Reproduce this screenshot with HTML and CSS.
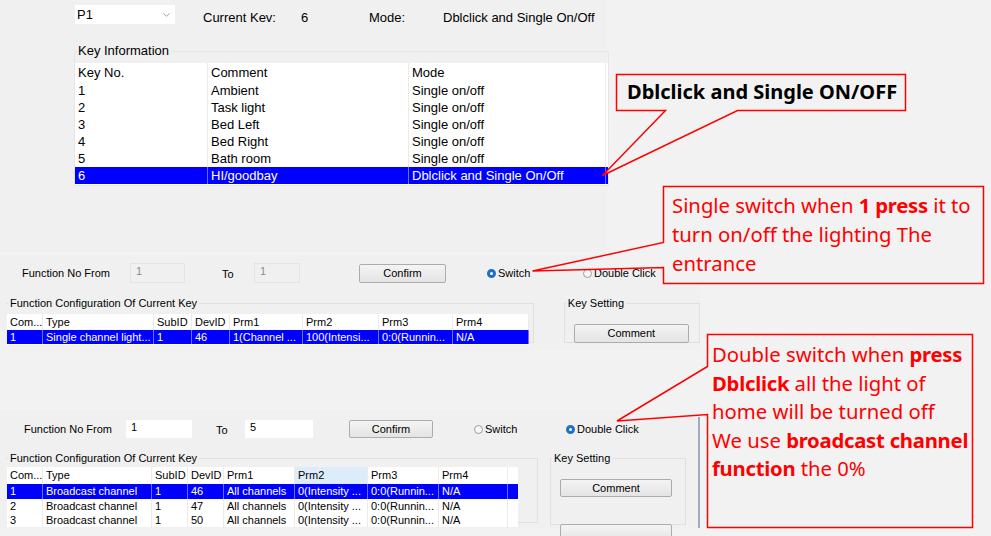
FILE: index.html
```html
<!doctype html>
<html>

<head>
    <meta charset="utf-8" />
    <title>Key Setting</title>
    <link rel="stylesheet" href="styles.css">
</head>

<body>
    <div class="slide">
        <!-- screenshot 1: key list -->
        <section class="shot shot-top">
            <div class="top-row">
                <div class="combo">
                    <span>P1</span>
                    <svg class="combo-arrow" width="7" height="4" viewBox="0 0 7 4">
                        <path d="M0.5 0.5L3.5 3.2L6.5 0.5" fill="none" stroke="#a0a0a0" stroke-width="1" />
                    </svg>
                </div>
                <span class="lbl lbl-kev">Current Kev:</span>
                <span class="lbl lbl-num">6</span>
                <span class="lbl lbl-mode">Mode:</span>
                <span class="lbl">Dblclick and Single On/Off</span>
            </div>
            <fieldset class="group group-key">
                <legend>Key Information</legend>
                <div class="grid key-grid">
                    <div class="row head"><span>Key No.</span><span>Comment</span><span>Mode</span></div>
                    <div class="row"><span>1</span><span>Ambient</span><span>Single on/off</span></div>
                    <div class="row"><span>2</span><span>Task light</span><span>Single on/off</span></div>
                    <div class="row"><span>3</span><span>Bed Left</span><span>Single on/off</span></div>
                    <div class="row"><span>4</span><span>Bed Right</span><span>Single on/off</span></div>
                    <div class="row"><span>5</span><span>Bath room</span><span>Single on/off</span></div>
                    <div class="row sel"><span>6</span><span>HI/goodbay</span><span>Dblclick and Single On/Off</span></div>
                </div>
            </fieldset>
        </section>

        <!-- screenshot 2: switch mode -->
        <section class="shot shot-mid">
            <div class="fn-row">
                <span class="fn-label">Function No From</span>
                <span class="field field-off w55">1</span>
                <span class="to">To</span>
                <span class="field field-off w46">1</span>
                <span class="btn btn-confirm">Confirm</span>
                <span class="radio radio-first"><i class="dot on"></i>Switch</span>
                <span class="radio"><i class="dot"></i>Double Click</span>
            </div>
            <div class="cfg-row">
                <fieldset class="group cfg">
                    <legend>Function Configuration Of Current Key</legend>
                    <div class="grid fn-grid">
                        <div class="row head"><span>Com...</span><span>Type</span><span>SubID</span><span>DevID</span><span>Prm1</span><span>Prm2</span><span>Prm3</span><span>Prm4</span></div>
                        <div class="row sel"><span>1</span><span>Single channel light...</span><span>1</span><span>46</span><span>1(Channel ...</span><span>100(Intensi...</span><span>0:0(Runnin...</span><span>N/A</span></div>
                    </div>
                </fieldset>
                <fieldset class="group keyset">
                    <legend>Key Setting</legend>
                    <span class="btn btn-comment">Comment</span>
                </fieldset>
            </div>
        </section>

        <!-- screenshot 3: double click mode -->
        <section class="shot shot-bot">
            <div class="bot-main">
                <div class="fn-row">
                    <span class="fn-label">Function No From</span>
                    <span class="field w66">1</span>
                    <span class="to">To</span>
                    <span class="field w68">5</span>
                    <span class="btn btn-confirm">Confirm</span>
                    <span class="radio radio-first"><i class="dot"></i>Switch</span>
                    <span class="radio"><i class="dot on"></i>Double Click</span>
                </div>
                <div class="cfg-row">
                    <fieldset class="group cfg">
                        <legend>Function Configuration Of Current Key</legend>
                        <div class="grid fn-grid">
                            <div class="row head"><span>Com...</span><span>Type</span><span>SubID</span><span>DevID</span><span>Prm1</span><span class="hot">Prm2</span><span>Prm3</span><span>Prm4</span></div>
                            <div class="row sel"><span>1</span><span>Broadcast channel</span><span>1</span><span>46</span><span>All channels</span><span>0(Intensity ...</span><span>0:0(Runnin...</span><span>N/A</span></div>
                            <div class="row"><span>2</span><span>Broadcast channel</span><span>1</span><span>47</span><span>All channels</span><span>0(Intensity ...</span><span>0:0(Runnin...</span><span>N/A</span></div>
                            <div class="row"><span>3</span><span>Broadcast channel</span><span>1</span><span>50</span><span>All channels</span><span>0(Intensity ...</span><span>0:0(Runnin...</span><span>N/A</span></div>
                        </div>
                    </fieldset>
                    <fieldset class="group keyset">
                        <legend>Key Setting</legend>
                        <span class="btn btn-comment">Comment</span>
                        <span class="btn btn-comment btn-next"></span>
                    </fieldset>
                </div>
            </div>
            <div class="splitter"></div>
        </section>

        <!-- callouts drawn over the screenshots -->
        <svg class="callouts" width="991" height="536" viewBox="0 0 991 536">
            <path d="M616.5 74.5H905.5V110.5H737.5L602.5 175.5L665.5 110.5H616.5Z" />
            <path d="M663.5 186.5H983.5V283.5H663.5V267.5L532.5 271L663.5 242.5Z" />
            <path d="M707.5 334.5H972.5V527.5H707.5V414.5L617 421L707.5 366.5Z" />
        </svg>
        <div class="note note-mode">Dblclick and Single ON/OFF</div>
        <div class="note note-red note-single">Single switch when <b>1 press</b> it to<br>turn on/off the lighting The<br>entrance</div>
        <div class="note note-red note-double">Double switch when <b>press</b><br><b>Dblclick</b> all the light of<br>home will be turned off<br>We use <b>broadcast channel</b><br><b>function</b> the 0%</div>
    </div>
</body>

</html>
```

FILE: styles.css
```css
* {
    margin: 0;
    padding: 0;
}

html,
body {
    height: 100%;
    overflow: hidden;
}

body {
    background: #f2f2f2;
    font-family: "Liberation Sans", Arial, sans-serif;
    color: #000;
}

.slide {
    position: relative;
    width: 991px;
    height: 536px;
    overflow: hidden;
}

.shot {
    background: #f0f0f0;
}

/* ---------- shared widgets ---------- */
.group {
    border: 1px solid #e0e0e0;
    min-width: 0;
}

.group legend {
    padding: 0 2px;
}

.grid {
    background: #fff;
}

.grid .row {
    display: grid;
}

.grid .row span {
    padding-left: 3px;
    white-space: nowrap;
    overflow: hidden;
    border-right: 1px solid #ebebeb;
}

.grid .row.sel {
    background: #0000ff;
    color: #fff;
}

.grid .row.sel span {
    border-right-color: #6d6dff;
}

.btn {
    display: block;
    box-sizing: border-box;
    border: 1px solid #acacac;
    border-radius: 2px;
    background: linear-gradient(#f4f4f4, #e4e4e4);
    text-align: center;
}

.radio {
    display: flex;
    align-items: center;
    gap: 2px;
}

.radio .dot {
    display: block;
    width: 9px;
    height: 9px;
    box-sizing: border-box;
    border: 1px solid #9c9c9c;
    border-radius: 50%;
    background: #f7f7f7;
}

.radio .dot.on {
    border: 3px solid #1b6fd0;
    background: #fff;
}

/* ---------- screenshot 1 ---------- */
.shot-top {
    width: 607px;
    height: 252px;
    padding-left: 75px;
    box-sizing: border-box;
    font-size: 13px;
}

.top-row {
    display: flex;
    padding-top: 5px;
    height: 19px;
}

.combo {
    width: 100px;
    height: 19px;
    box-sizing: border-box;
    padding: 0 5px 0 2px;
    background: #fff;
    display: flex;
    align-items: center;
    justify-content: space-between;
    line-height: 19px;
}

.top-row .lbl {
    line-height: 19px;
    padding-top: 3px;
    white-space: nowrap;
}

.lbl-kev {
    margin-left: 28px;
    width: 98px;
}

.lbl-num {
    width: 68px;
}

.lbl-mode {
    width: 74px;
}

.group-key {
    margin: 19px 0 0 -1px;
    width: 533px;
    border-color: #e6e6e6;
}

.group-key legend {
    margin-left: 1px;
    line-height: 16px;
}

.key-grid {
    margin-top: 4px;
    height: 122px;
}

.key-grid .row {
    grid-template-columns: 133px 201px 197px;
    height: 17px;
    line-height: 17px;
}

.key-grid .row.head {
    height: 19px;
    line-height: 20px;
}

/* ---------- screenshot 2 & 3 ---------- */
.shot-mid {
    margin-top: 3px;
    width: 700px;
    height: 95px;
    font-size: 11px;
}

.fn-row {
    display: flex;
    align-items: center;
    padding: 8px 0 0 22px;
    height: 20px;
}

.fn-label {
    width: 108px;
}

.field {
    align-self: stretch;
    box-sizing: border-box;
    padding: 1px 0 0 5px;
    line-height: 12px;
    background: #fff;
}

.field-off {
    background: #f0f0f0;
    border: 1px solid #e4e4e4;
    color: #8c8c8c;
}

.w55 {
    width: 55px;
}

.w46 {
    width: 46px;
}

.w66 {
    width: 66px;
}

.w68 {
    width: 68px;
}

.to {
    margin-left: 37px;
    width: 32px;
    padding-top: 2px;
}

.btn-confirm {
    margin-left: 59px;
    width: 87px;
    height: 19px;
    line-height: 17px;
}

.radio-first {
    margin-left: 41px;
    width: 96px;
}

.cfg-row {
    display: flex;
    align-items: flex-start;
    margin-top: 13px;
}

.cfg {
    margin-left: 6px;
    width: 529px;
    height: 45px;
    border-left-color: transparent;
}

.cfg legend {
    margin-left: 1px;
    line-height: 14px;
}

.fn-grid {
    margin-top: 4px;
    width: 522px;
    height: 31px;
}

.shot-mid .fn-grid .row {
    grid-template-columns: 36px 111px 38px 38px 73px 76px 74px 76px;
    height: 14px;
    line-height: 14px;
}

.shot-mid .fn-grid .row.head {
    height: 16px;
    line-height: 16px;
}

.keyset {
    margin-left: 30px;
    width: 135px;
    height: 45px;
}

.keyset legend {
    margin-left: 1px;
    line-height: 14px;
}

.btn-comment {
    margin: 14px 0 0 9px;
    width: 115px;
    height: 19px;
    line-height: 17px;
}

/* screenshot 3 */
.shot-bot {
    margin-top: 60px;
    width: 700px;
    height: 118px;
    font-size: 11px;
    display: flex;
}

.bot-main {
    width: 698px;
}

.splitter {
    width: 2px;
    margin-top: 7px;
    background: #a3acba;
}

.shot-bot .fn-row {
    padding: 10px 0 0 24px;
    height: 18px;
}

.shot-bot .fn-label {
    width: 102px;
}

.shot-bot .to {
    margin-left: 24px;
    width: 29px;
}

.shot-bot .btn-confirm {
    margin-left: 36px;
    width: 84px;
    height: 18px;
    line-height: 16px;
}

.shot-bot .radio-first {
    margin-left: 41px;
    width: 92px;
}

.shot-bot .cfg-row {
    margin-top: 13px;
}

.shot-bot .cfg {
    width: 530px;
    height: 70px;
}

.shot-bot .fn-grid {
    margin-top: 2px;
    width: 511px;
    height: 60px;
}

.shot-bot .fn-grid .row {
    grid-template-columns: 36px 109px 36px 36px 71px 73px 71px 69px;
    height: 14.5px;
    line-height: 14.5px;
}

.shot-bot .fn-grid .row.head {
    height: 17px;
    line-height: 17px;
}

.fn-grid .row span.hot {
    background: #dcecfb;
}

.shot-bot .keyset {
    margin-left: 12px;
    width: 134px;
    height: 72px;
}

.shot-bot .btn-comment {
    width: 112px;
    height: 18px;
    line-height: 16px;
}

.btn-next {
    margin-top: 27px !important;
}

/* ---------- callouts ---------- */
.callouts {
    position: absolute;
    top: 0;
    left: 0;
}

.callouts path {
    fill: #f2f2f2;
    stroke: #ff0000;
    stroke-width: 1.5;
    stroke-linejoin: miter;
}

.note {
    position: absolute;
    font-family: "Noto Sans", "Open Sans", sans-serif;
    white-space: nowrap;
}

.note-mode {
    left: 627px;
    top: 78px;
    font-size: 20px;
    font-weight: 700;
    line-height: 28px;
}

.note-red {
    color: #ff0000;
    font-size: 20.3px;
}

.note-red b {
    letter-spacing: -0.25px;
}

.note-single {
    left: 672px;
    top: 191px;
    line-height: 29px;
}

.note-double {
    left: 712px;
    top: 340px;
    line-height: 28.5px;
}
```
